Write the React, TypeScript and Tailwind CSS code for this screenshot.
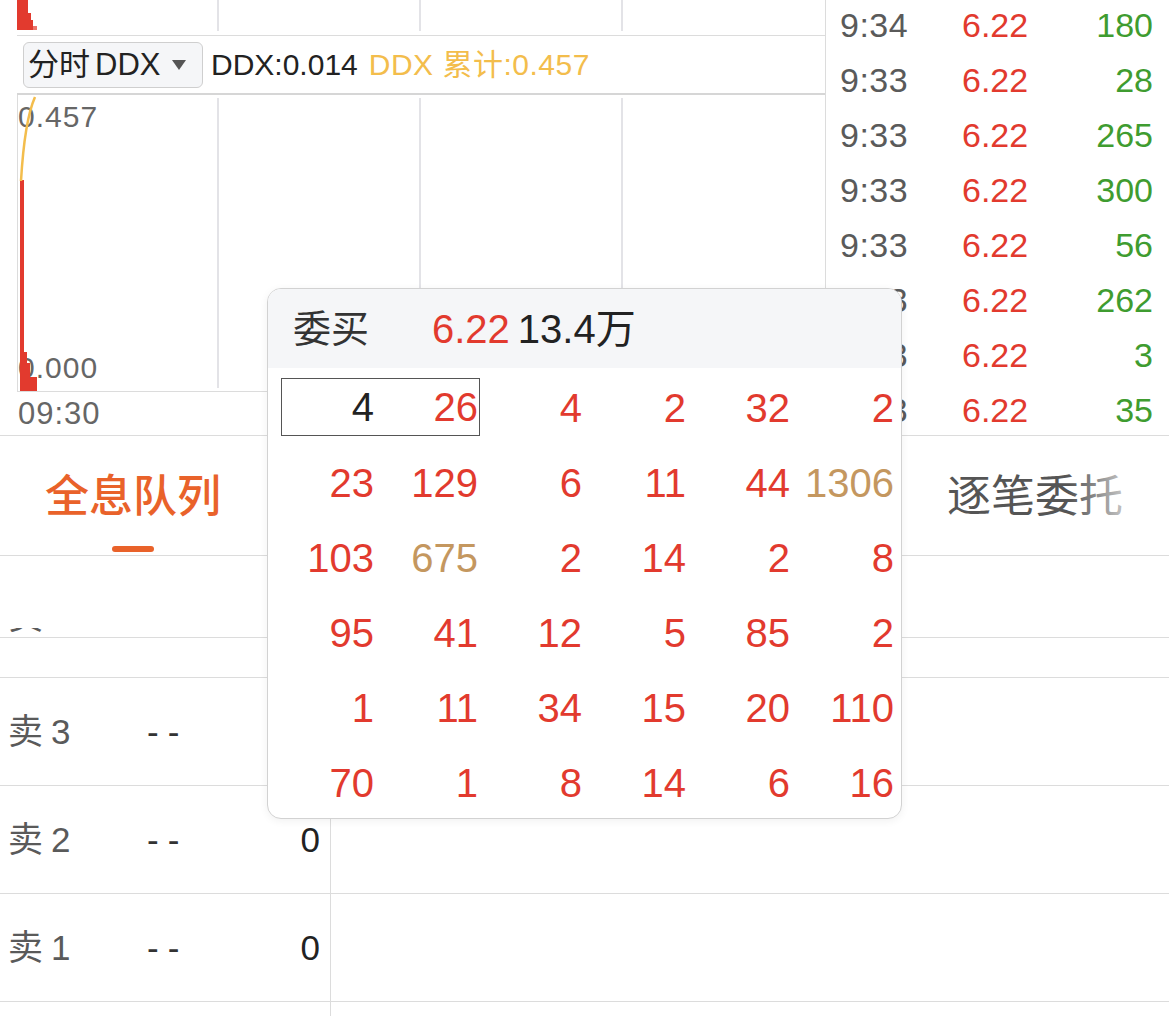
import React from "react";

const RED = "text-[#e23a2e]";
const TAN = "text-[#c4975f]";
const DARK = "text-[#222222]";

type Cell = { v: string; c: "r" | "t" | "d" };

const gridRows: Cell[][] = [
  [
    { v: "4", c: "r" },
    { v: "2", c: "r" },
    { v: "32", c: "r" },
    { v: "2", c: "r" },
  ],
  [
    { v: "23", c: "r" },
    { v: "129", c: "r" },
    { v: "6", c: "r" },
    { v: "11", c: "r" },
    { v: "44", c: "r" },
    { v: "1306", c: "t" },
  ],
  [
    { v: "103", c: "r" },
    { v: "675", c: "t" },
    { v: "2", c: "r" },
    { v: "14", c: "r" },
    { v: "2", c: "r" },
    { v: "8", c: "r" },
  ],
  [
    { v: "95", c: "r" },
    { v: "41", c: "r" },
    { v: "12", c: "r" },
    { v: "5", c: "r" },
    { v: "85", c: "r" },
    { v: "2", c: "r" },
  ],
  [
    { v: "1", c: "r" },
    { v: "11", c: "r" },
    { v: "34", c: "r" },
    { v: "15", c: "r" },
    { v: "20", c: "r" },
    { v: "110", c: "r" },
  ],
  [
    { v: "70", c: "r" },
    { v: "1", c: "r" },
    { v: "8", c: "r" },
    { v: "14", c: "r" },
    { v: "6", c: "r" },
    { v: "16", c: "r" },
  ],
];

const trades: [string, string][] = [
  ["9:34", "180"],
  ["9:33", "28"],
  ["9:33", "265"],
  ["9:33", "300"],
  ["9:33", "56"],
  ["9:33", "262"],
  ["9:33", "3"],
  ["9:33", "35"],
];

function colorOf(c: Cell["c"]) {
  if (c === "t") return TAN;
  if (c === "d") return DARK;
  return RED;
}

function SellRow({ n }: { n: string }) {
  return (
    <div className="flex h-[108px] border-b border-[#dcdcdc]">
      <div className="w-[331px] border-r border-[#dcdcdc] flex items-center text-[35px] leading-none">
        <span className="pl-[8px] w-[147px] text-[#5a5a5a]">
          卖<span className="ml-[8px]">{n}</span>
        </span>
        <span className="text-[#333333] tracking-[9px]">--</span>
        <span className="ml-auto pr-[10px] text-[#222222]">0</span>
      </div>
      <div className="flex-1" />
    </div>
  );
}

export default function App() {
  return (
    <div className="relative w-[1169px] h-[1016px] overflow-hidden bg-white text-[#222222] font-['Liberation_Sans','Noto_Sans_CJK_SC',sans-serif]">
      {/* Top section */}
      <div className="flex h-[436px] border-b border-[#dcdcdc]">
        {/* chart column */}
        <div className="ml-[17px] w-[808px] flex flex-col">
          <div className="h-[36px] border-b border-[#dcdcdc]">
            <svg width="808" height="35" className="block">
              <rect x="0" y="0" width="11" height="30" fill="#e23a2e" />
              <rect x="11" y="13" width="3" height="17" fill="#e23a2e" />
              <rect x="14" y="20" width="2" height="10" fill="#e23a2e" />
              <rect x="16" y="26" width="4" height="4" fill="#e23a2e" opacity="0.7" />
              <line x1="201" y1="0" x2="201" y2="31" stroke="#e3e3e7" strokeWidth="2" />
              <line x1="403" y1="0" x2="403" y2="31" stroke="#e3e3e7" strokeWidth="2" />
              <line x1="605" y1="0" x2="605" y2="31" stroke="#e3e3e7" strokeWidth="2" />
            </svg>
          </div>
          <div className="h-[59px] border-b-2 border-[#d6d6d6] flex items-center">
            <div className="ml-[6px] w-[180px] h-[46px] rounded-[6px] border border-[#cfcfcf] bg-[#f5f6f8] flex items-center pl-[4px]">
              <span className="text-[31px] leading-none text-[#222222]">
                分时<span className="ml-[5px]">DDX</span>
              </span>
              <svg width="14" height="10" className="ml-auto mr-[16px]" viewBox="0 0 14 10">
                <polygon points="0,0 14,0 7,10" fill="#555555" />
              </svg>
            </div>
            <span className="ml-[8px] text-[30px] leading-none text-[#222222]">DDX:0.014</span>
            <span className="ml-[11px] text-[30px] leading-none text-[#f3bd4c] tracking-[0.5px]">DDX 累计:0.457</span>
          </div>
          <div className="relative h-[297px] border-l border-b border-[#dcdcdc]">
            <span className="absolute left-0 top-[7px] text-[30px] leading-[30px] tracking-[1px] text-[#666666]">0.457</span>
            <span className="absolute left-0 top-[258px] text-[30px] leading-[30px] tracking-[1px] text-[#666666]">0.000</span>
            <svg width="807" height="296" className="absolute left-0 top-0">
              <line x1="200" y1="3" x2="200" y2="293" stroke="#e3e3e7" strokeWidth="2" />
              <line x1="402" y1="3" x2="402" y2="293" stroke="#e3e3e7" strokeWidth="2" />
              <line x1="604" y1="3" x2="604" y2="293" stroke="#e3e3e7" strokeWidth="2" />
              <rect x="2" y="85" width="4" height="211" fill="#e23a2e" />
              <rect x="2" y="257" width="7" height="39" fill="#e23a2e" />
              <rect x="9" y="268" width="3" height="28" fill="#e23a2e" />
              <rect x="12" y="282" width="7" height="14" fill="#e23a2e" />
              <path d="M3 86 C5 52 9 20 17 2" stroke="#f3bd4c" strokeWidth="2.5" fill="none" />
            </svg>
          </div>
          <div className="h-[43px] flex items-center pl-[1px] text-[31px] leading-none tracking-[1px] text-[#666666]">09:30</div>
        </div>
        {/* trades column */}
        <div className="w-[344px] border-l border-[#dcdcdc] overflow-hidden">
          <div className="-mt-[3px]">
            {trades.map(([t, v], i) => (
              <div key={i} className="flex h-[55px] items-center text-[34px] leading-none">
                <span className="pl-[14px] w-[136px] text-[#5a5a5a] tracking-[0.5px]">{t}</span>
                <span className={RED}>6.22</span>
                <span className="ml-auto pr-[16px] text-[#3f9c30]">{v}</span>
              </div>
            ))}
          </div>
        </div>
      </div>

      {/* Tabs */}
      <div className="relative h-[120px] border-b border-[#dcdcdc] flex">
        <div className="ml-[45px] flex flex-col items-center">
          <div className="mt-[39px] text-[44px] leading-[44px] text-[#e9622a] font-medium">全息队列</div>
          <div className="mt-[27px] w-[42px] h-[6px] rounded-full bg-[#e9622a]" />
        </div>
        <div className="ml-auto mr-[46px] mt-[39px] text-[44px] leading-[44px] text-[#555555]">逐笔委托</div>
        <div className="absolute right-0 top-0 h-full w-[100px] bg-linear-to-r from-white/0 via-white/60 to-white/90" />
      </div>

      {/* partially scrolled row */}
      <div className="h-[82px] border-b border-[#dcdcdc] flex flex-col">
        <div className="flex-1" />
        <div className="h-[7px] mb-[2px] overflow-hidden pl-[8px]">
          <div className="-mt-[29px] text-[35px] leading-[35px] text-[#5a5a5a]">卖</div>
        </div>
      </div>
      <div className="h-[40px] border-b border-[#dcdcdc]" />

      <SellRow n="3" />
      <SellRow n="2" />
      <SellRow n="1" />
      <div className="flex h-[20px]">
        <div className="w-[331px] border-r border-[#dcdcdc]" />
      </div>

      {/* Popup */}
      <div className="absolute left-[267px] top-[288px] w-[635px] h-[531px] rounded-[14px] border border-[#d2d2d2] bg-white overflow-hidden shadow-[0_2px_8px_rgba(0,0,0,0.06)]">
        <div className="h-[79px] bg-[#f5f6f8] flex items-center pl-[25px]">
          <span className="w-[139px] text-[38px] leading-none text-[#333333]">委买</span>
          <span className={`text-[40px] leading-none ${RED}`}>6.22</span>
          <span className="ml-[8px] text-[40px] leading-none text-[#222222]">13.4万</span>
        </div>
        <div className="grid grid-cols-[repeat(6,104px)] pl-[2px] pt-[3px] text-[40px] leading-[75px]">
          <div className="col-span-2 ml-[11px] mr-[-2px] mt-[7px] mb-[10px] h-[58px] border border-[#555555] flex items-center leading-none">
            <span className="w-[92px] text-right text-[#222222]">4</span>
            <span className={`w-[104px] text-right ${RED}`}>26</span>
          </div>
          {gridRows.map((row, ri) =>
            row.map((cell, ci) => (
              <div key={`${ri}-${ci}`} className={`text-right ${colorOf(cell.c)}`}>
                {cell.v}
              </div>
            ))
          )}
        </div>
      </div>
    </div>
  );
}
